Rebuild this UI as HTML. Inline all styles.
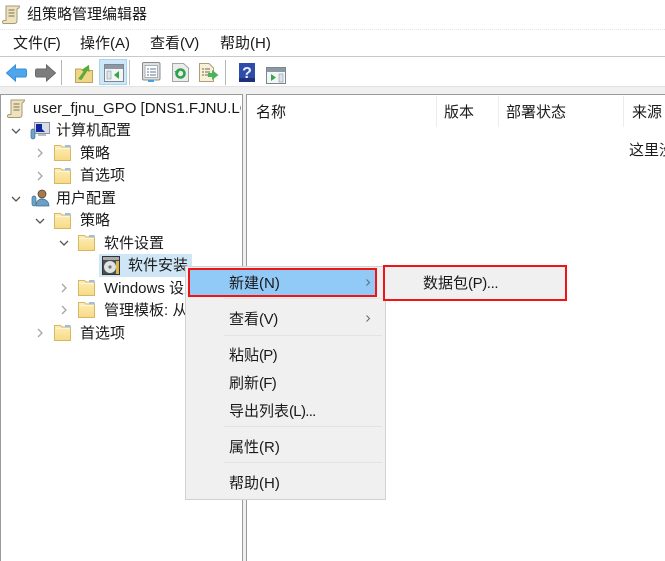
<!DOCTYPE html>
<html><head><meta charset="utf-8"><style>
html,body{margin:0;padding:0;width:665px;height:561px;overflow:hidden;background:#fff}
body{position:relative;font-family:"Liberation Sans","Noto Sans CJK SC",sans-serif;font-size:15px;color:#1a1a1a}
.t{position:absolute;white-space:nowrap;line-height:20px;height:20px}
.t i{font-style:normal;letter-spacing:-.4px}
.t b{font-weight:normal;letter-spacing:-.7px}
.a{position:absolute}
svg{position:absolute;overflow:visible}
</style></head><body>
<svg width="0" height="0" style="position:absolute"><defs>
<linearGradient id="fg" x1="0" y1="0" x2="0" y2="1"><stop offset="0" stop-color="#fdeeb8"/><stop offset="1" stop-color="#f7da85"/></linearGradient>
<g id="f"><path d="M.5 16.5V1.5H6.5L8 3H16.5V16.5Z" fill="url(#fg)" stroke="#d6b765"/><path d="M1.5 4.5H15.5" stroke="#fff6d6"/><path d="M11 1h5.5v2.5H11z" fill="#9fbdd6"/></g>
<g id="ar"><path d="M0 0L4 4L0 8" fill="none" stroke="#a6a6a6" stroke-width="1.3"/></g>
<g id="dn"><path d="M0 0L4 4L8 0" fill="none" stroke="#555" stroke-width="1.3"/></g>
<g id="sc"><path d="M4 1H17.5C17.5 2.5 16.5 3.5 15 4V15.5C15 17.5 14 18.5 12.5 18.5H2C-.2 18.500 0 15.500 2.500 15.500H4Z" fill="#efe3bd" stroke="#a49a78"/><path d="M6.500 5h6M6.500 8h6M6.500 11h6" stroke="#77705a"/></g>
</defs></svg>

<!-- title -->
<svg style="left:2px;top:5px" width="18" height="20"><use href="#sc"/></svg>
<div class="t" style="left:27px;top:5px">组策略管理编辑器</div>
<div class="a" style="left:0;top:29px;width:665px;border-top:1px dotted #e4e4e4"></div>

<!-- menu -->
<div class="t" style="left:13px;top:34px">文件<b>(F)</b></div>
<div class="t" style="left:80px;top:34px">操作(A)</div>
<div class="t" style="left:150px;top:34px">查看<i>(V)</i></div>
<div class="t" style="left:220px;top:34px">帮助(H)</div>
<div class="a" style="left:0;top:56px;width:665px;height:1px;background:#c9c9c9"></div>

<!-- toolbar -->
<div class="a" style="left:0;top:86px;width:665px;height:8px;background:#f0f0f0;border-top:1px solid #e2e2e2"></div>
<svg style="left:6px;top:64px" width="21" height="18"><path d="M.5 9L9.500 1V5H19C20 5 20.500 6 20.500 7V11C20.500 12 20 13 19 13H9.500V17Z" fill="#4fa6ec" stroke="#3a8fd6"/></svg>
<svg style="left:35px;top:64px" width="21" height="18"><path d="M20.500 9L11.500 1V5H2C1 5 .5 6 .5 7V11C.5 12 1 13 2 13H11.500V17Z" fill="#7d7d7d" stroke="#6a6a6a"/></svg>
<div class="a" style="left:61px;top:60px;width:1px;height:25px;background:#b5b5b5"></div>
<svg style="left:75px;top:64px" width="18" height="19"><path d="M.5 18.500V5H6L7.500 6.500H17.500V18.500Z" fill="#f2d487" stroke="#c2a35a"/><path d="M3 15L8.500 7.500L6.500 6L14 .8L14.500 8L12.500 6.800L6.500 16Z" fill="#5cab3a"/></svg>
<div class="a" style="left:99px;top:59px;width:28px;height:26px;background:#cde6f8;border:1px solid #a9d4f2;box-sizing:border-box"></div>
<svg style="left:104px;top:64px" width="20" height="18"><rect x=".5" y=".5" width="19" height="17" fill="#f5f5f5" stroke="#7b8791"/><rect x="1" y="1" width="18" height="4" fill="#8c99a5"/><rect x="3" y="7" width="4" height="8" fill="#dbe5ee" stroke="#7b8791" stroke-width=".5"/><path d="M15 7V15L10 11Z" fill="#33a84b"/></svg>
<div class="a" style="left:129px;top:60px;width:1px;height:25px;background:#c4c4c4"></div>
<svg style="left:142px;top:62px" width="18" height="20"><rect x=".5" y=".5" width="17.500" height="17.500" rx="1.500" fill="#dcdfe1" stroke="#8b8b8b"/><rect x="3" y="3.500" width="12.500" height="12" fill="#fff" stroke="#aab1b6"/><path d="M5 7h2M8 7h6M5 10h2M8 10h6M5 13h2M8 13h6" stroke="#5f7a92"/><rect x="6" y="18" width="6" height="2" fill="#4aa0e0"/></svg>
<svg style="left:172px;top:63px" width="17" height="19"><path d="M.5 .5H11.500L16.500 5V18.500H.5Z" fill="#ececec" stroke="#a5a5a5"/><circle cx="8.500" cy="10.500" r="4" fill="none" stroke="#2da34a" stroke-width="2.600"/><path d="M2.500 8h5l-2.500 4z" fill="#2da34a"/></svg>
<svg style="left:199px;top:63px" width="20" height="20"><path d="M.5 .5H10L14.500 5V18.500H.5Z" fill="#f8f1d8" stroke="#ad9f77"/><path d="M3 6h2M6 6h5M3 9h2M6 9h5M3 12h2M6 12h4" stroke="#6b6654"/><path d="M9 10h4V7l6.500 5l-6.500 5v-3H9Z" fill="#49b55a"/></svg>
<div class="a" style="left:225px;top:60px;width:1px;height:25px;background:#b5b5b5"></div>
<svg style="left:239px;top:63px" width="17" height="20"><rect width="16" height="19" fill="#2f4cab"/><rect width="16" height="4" y="15" fill="#1d3279"/><text x="8" y="15" text-anchor="middle" font-family="Liberation Sans" font-weight="bold" font-size="16" fill="#e8eefc">?</text></svg>
<svg style="left:266px;top:67px" width="20" height="17"><rect x=".5" y=".5" width="19" height="16" fill="#f5f5f5" stroke="#7b8791"/><rect x="1" y="1" width="18" height="4" fill="#8c99a5"/><path d="M5 7V14L10 10.500Z" fill="#33a84b"/><rect x="13" y="7" width="4" height="8" fill="#dbe5ee" stroke="#7b8791" stroke-width=".5"/></svg>

<!-- panes -->
<div class="a" style="left:0;top:94px;width:243px;height:467px;border-top:1px solid #9a9a9a;border-left:1px solid #9a9a9a;border-right:1px solid #9a9a9a;box-sizing:border-box;background:#fff;overflow:hidden"></div>
<div class="a" style="left:243px;top:95px;width:3px;height:466px;background:#f0f0f0"></div>
<div class="a" style="left:246px;top:94px;width:419px;height:467px;border-top:1px solid #9a9a9a;border-left:1px solid #9a9a9a;box-sizing:border-box;background:#fff"></div>

<!-- list header -->
<div class="t" style="left:256px;top:103px">名称</div>
<div class="t" style="left:444px;top:103px">版本</div>
<div class="t" style="left:506px;top:103px">部署状态</div>
<div class="t" style="left:632px;top:103px">来源</div>
<div class="a" style="left:436px;top:96px;width:1px;height:31px;background:#ececec"></div>
<div class="a" style="left:498px;top:96px;width:1px;height:31px;background:#ececec"></div>
<div class="a" style="left:623px;top:96px;width:1px;height:31px;background:#ececec"></div>
<div class="t" style="left:629px;top:141px">这里没</div>

<!-- tree -->
<div class="a" style="left:33px;top:98px;width:208px;height:21px;overflow:hidden"><div class="t" style="left:0;top:1px">user_fjnu_GPO [DNS1.FJNU.LOCAL]</div></div>
<svg style="left:7px;top:99px" width="18" height="20"><use href="#sc"/></svg>

<svg style="left:12px;top:129px" width="9" height="6"><use href="#dn"/></svg>
<svg style="left:30px;top:122px" width="20" height="18"><rect x="4.500" y=".5" width="15" height="11" fill="#d8dee6" stroke="#8b96a5"/><path d="M6 2h6v5l3 3H6z" fill="#12289c"/><path d="M8 12h8v2H8z" fill="#b9bec5"/><rect x="1" y="7" width="4" height="10" rx="2" fill="#6fa3c9" stroke="#3e6f94" stroke-width=".7"/></svg>
<div class="t" style="left:56px;top:121px">计算机配置</div>

<svg style="left:38px;top:149px" width="5" height="9"><use href="#ar"/></svg>
<svg style="left:54px;top:144px" width="17" height="18"><use href="#f"/></svg>
<div class="t" style="left:80px;top:144px">策略</div>

<svg style="left:38px;top:172px" width="5" height="9"><use href="#ar"/></svg>
<svg style="left:54px;top:167px" width="17" height="18"><use href="#f"/></svg>
<div class="t" style="left:80px;top:166px">首选项</div>

<svg style="left:12px;top:197px" width="9" height="6"><use href="#dn"/></svg>
<svg style="left:31px;top:189px" width="19" height="18"><circle cx="11" cy="5" r="4" fill="#a3794e" stroke="#4d3a26" stroke-width=".7"/><path d="M5 17c0-5 3-7 6-7s7 2 7 7z" fill="#6c9fc4" stroke="#3e6f94" stroke-width=".7"/><rect x="1" y="7" width="4" height="10" rx="2" fill="#6fa3c9" stroke="#3e6f94" stroke-width=".7"/></svg>
<div class="t" style="left:56px;top:189px">用户配置</div>

<svg style="left:36px;top:219px" width="9" height="6"><use href="#dn"/></svg>
<svg style="left:54px;top:212px" width="17" height="18"><use href="#f"/></svg>
<div class="t" style="left:80px;top:211px">策略</div>

<svg style="left:60px;top:241px" width="9" height="6"><use href="#dn"/></svg>
<svg style="left:78px;top:234px" width="17" height="18"><use href="#f"/></svg>
<div class="t" style="left:104px;top:234px">软件设置</div>

<div class="a" style="left:99px;top:254px;width:93px;height:23px;background:#cfe6f7"></div>
<svg style="left:102px;top:256px" width="18" height="19"><rect x=".5" y=".5" width="17" height="18" fill="#4c4f50" stroke="#333"/><rect x="1" y="1" width="16" height="3" fill="#a5adb3"/><circle cx="8" cy="11" r="6" fill="#dfe3e2"/><circle cx="8" cy="11" r="1.600" fill="#777"/><rect x="14" y="5" width="3" height="13" fill="#d8b74e"/></svg>
<div class="t" style="left:128px;top:256px">软件安装</div>

<svg style="left:62px;top:284px" width="5" height="9"><use href="#ar"/></svg>
<svg style="left:78px;top:279px" width="17" height="18"><use href="#f"/></svg>
<div class="t" style="left:104px;top:279px">Windows 设置</div>

<svg style="left:62px;top:306px" width="5" height="9"><use href="#ar"/></svg>
<svg style="left:78px;top:301px" width="17" height="18"><use href="#f"/></svg>
<div class="t" style="left:104px;top:301px">管理模板: 从本地</div>

<svg style="left:38px;top:329px" width="5" height="9"><use href="#ar"/></svg>
<svg style="left:54px;top:324px" width="17" height="18"><use href="#f"/></svg>
<div class="t" style="left:80px;top:324px">首选项</div>

<!-- context menu -->
<div class="a" style="left:185px;top:266px;width:201px;height:234px;background:#f0f0f0;border:1px solid #d2d2d2;box-sizing:border-box"></div>
<div class="a" style="left:188px;top:268px;width:189px;height:29px;background:#91c9f7;border:2px solid #f01414;box-sizing:border-box"></div>
<div class="t" style="left:229px;top:274px">新建(N)</div>
<svg style="left:366px;top:279px" width="4" height="7"><path d="M.5 .5L3.500 3.500L.5 6.500" fill="none" stroke="#666"/></svg>
<div class="a" style="left:224px;top:298px;width:158px;height:1px;background:#e3e3e3"></div>
<div class="t" style="left:229px;top:310px">查看<i>(V)</i></div>
<svg style="left:366px;top:315px" width="4" height="7"><path d="M.5 .5L3.500 3.500L.5 6.500" fill="none" stroke="#666"/></svg>
<div class="a" style="left:224px;top:335px;width:158px;height:1px;background:#e3e3e3"></div>
<div class="t" style="left:229px;top:346px">粘贴<b>(P)</b></div>
<div class="t" style="left:229px;top:374px">刷新<b>(F)</b></div>
<div class="t" style="left:229px;top:402px">导出列表<b>(L)...</b></div>
<div class="a" style="left:224px;top:426px;width:158px;height:1px;background:#e3e3e3"></div>
<div class="t" style="left:229px;top:438px">属性(R)</div>
<div class="a" style="left:224px;top:462px;width:158px;height:1px;background:#e3e3e3"></div>
<div class="t" style="left:229px;top:474px">帮助(H)</div>

<!-- submenu -->
<div class="a" style="left:383px;top:265px;width:184px;height:36px;background:#f0f0f0;border:2px solid #f01414;box-sizing:border-box"></div>
<div class="t" style="left:423px;top:274px">数据包<i>(P)...</i></div>
</body></html>
